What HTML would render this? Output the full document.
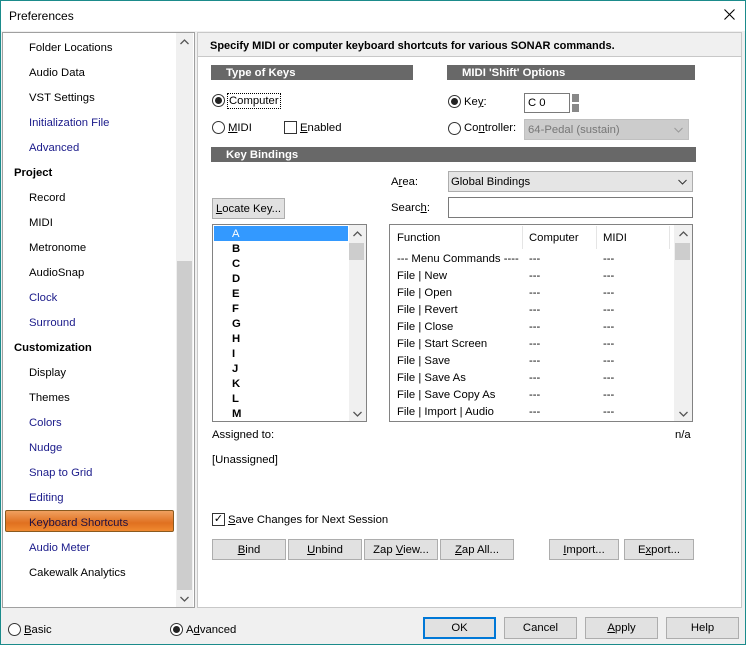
<!DOCTYPE html>
<html><head><style>
*{box-sizing:border-box;margin:0;padding:0}
body{width:746px;height:645px;overflow:hidden;background:#f0f0f0;font-family:"Liberation Sans",sans-serif;font-size:11.3px;line-height:16px;color:#000;position:relative}
.a{position:absolute;white-space:nowrap}
#win{position:absolute;left:0;top:0;width:746px;height:645px;border:1px solid #1b8b8b}
#title{left:1px;top:1px;width:744px;height:30px;background:#fff}
.nav{left:29px}
.b{color:#1a1a8a}
.bar{background:#686868;color:#fff;font-weight:bold;height:15px;line-height:16px;padding-left:15px}
.btn{background:#e1e1e1;border:1px solid #adadad;height:21px;line-height:20px;text-align:center}
.rad{width:13px;height:13px;border:1px solid #333;border-radius:50%;background:#fff}
.rad.on::after{content:"";position:absolute;left:2px;top:2px;width:7px;height:7px;border-radius:50%;background:#222}
.chk{width:13px;height:13px;border:1px solid #333;background:#fff}
.u{text-decoration:underline}
.lk{font-weight:bold;left:232px}
.fr{left:397px}.cc{left:529px}.mc{left:603px}
.chev{position:absolute;right:5px;top:7px}
</style></head><body>
<div id="win"></div>
<div class="a" id="title"></div>
<div class="a" style="left:9px;top:8px;font-size:12px">Preferences</div>
<svg class="a" style="left:724px;top:9px" width="11" height="11"><path d="M0.5 0.5L10.5 10.5M10.5 0.5L0.5 10.5" stroke="#000" stroke-width="1.1"/></svg>

<!-- left panel -->
<div class="a" style="left:2px;top:32px;width:193px;height:576px;background:#fff;border:1px solid #a0a0a0"></div>
<div class="a" style="left:176px;top:33px;width:17px;height:574px;background:#f0f0f0"></div>
<div class="a" style="left:177px;top:261px;width:15px;height:329px;background:#cdcdcd"></div>
<svg class="a" style="left:180px;top:39px" width="9" height="6"><path d="M0.5 5L4.5 1L8.5 5" stroke="#555" fill="none" stroke-width="1.3"/></svg>
<svg class="a" style="left:180px;top:596px" width="9" height="6"><path d="M0.5 1L4.5 5L8.5 1" stroke="#555" fill="none" stroke-width="1.3"/></svg>
<div class="a nav" style="top:40px">Folder Locations</div>
<div class="a nav" style="top:65px">Audio Data</div>
<div class="a nav" style="top:90px">VST Settings</div>
<div class="a nav b" style="top:115px">Initialization File</div>
<div class="a nav b" style="top:140px">Advanced</div>
<div class="a" style="left:14px;top:165px;font-weight:bold">Project</div>
<div class="a nav" style="top:190px">Record</div>
<div class="a nav" style="top:215px">MIDI</div>
<div class="a nav" style="top:240px">Metronome</div>
<div class="a nav" style="top:265px">AudioSnap</div>
<div class="a nav b" style="top:290px">Clock</div>
<div class="a nav b" style="top:315px">Surround</div>
<div class="a" style="left:14px;top:340px;font-weight:bold">Customization</div>
<div class="a nav" style="top:365px">Display</div>
<div class="a nav" style="top:390px">Themes</div>
<div class="a nav b" style="top:415px">Colors</div>
<div class="a nav b" style="top:440px">Nudge</div>
<div class="a nav b" style="top:465px">Snap to Grid</div>
<div class="a nav b" style="top:490px">Editing</div>
<div class="a" style="left:5px;top:510px;width:169px;height:22px;border:1px solid #8a5a20;border-radius:2px;background:linear-gradient(#f0a060,#e07020 60%,#f08a30)"></div>
<div class="a nav" style="top:515px;color:#201040">Keyboard Shortcuts</div>
<div class="a nav b" style="top:540px">Audio Meter</div>
<div class="a nav" style="top:565px">Cakewalk Analytics</div>

<!-- right panel -->
<div class="a" style="left:197px;top:32px;width:545px;height:576px;background:#fff;border:1px solid #c8c8c8"></div>
<div class="a" style="left:198px;top:33px;width:543px;height:24px;background:#f0f0f0;border-bottom:1px solid #c8c8c8"></div>
<div class="a" style="left:210px;top:38px;font-weight:bold;font-size:11px">Specify MIDI or computer keyboard shortcuts for various SONAR commands.</div>

<div class="a bar" style="left:211px;top:65px;width:202px">Type of Keys</div>
<div class="a bar" style="left:447px;top:65px;width:248px;padding-left:15px">MIDI 'Shift' Options</div>
<div class="a rad on" style="left:212px;top:94px"></div>
<div class="a" style="left:227px;top:93px;border:1px dotted #000;padding:0 1px;line-height:14px">Computer</div>
<div class="a rad" style="left:212px;top:121px"></div>
<div class="a" style="left:228px;top:120px"><span class="u">M</span>IDI</div>
<div class="a chk" style="left:284px;top:121px"></div>
<div class="a" style="left:300px;top:120px"><span class="u">E</span>nabled</div>

<div class="a rad on" style="left:448px;top:95px"></div>
<div class="a" style="left:464px;top:94px">Ke<span class="u">y</span>:</div>
<div class="a" style="left:524px;top:93px;width:46px;height:20px;border:1px solid #7a7a7a;background:#fff;padding:1px 3px">C 0</div>
<div class="a" style="left:572px;top:94px;width:7px;height:8px;background:#888"></div>
<div class="a" style="left:572px;top:104px;width:7px;height:8px;background:#888"></div>
<div class="a rad" style="left:448px;top:122px"></div>
<div class="a" style="left:464px;top:120px">Co<span class="u">n</span>troller:</div>
<div class="a" style="left:524px;top:119px;width:165px;height:21px;background:#ccc;border:1px solid #c0c0c0;color:#777;padding:2px 3px">64-Pedal (sustain)<svg class="chev" width="9" height="6"><path d="M0.5 1L4.5 5L8.5 1" stroke="#999" fill="none"/></svg></div>

<div class="a bar" style="left:211px;top:147px;width:485px">Key Bindings</div>

<div class="a" style="left:391px;top:174px">A<span class="u">r</span>ea:</div>
<div class="a" style="left:448px;top:171px;width:245px;height:21px;background:#e5e5e5;border:1px solid #adadad;padding:2px 2px">Global Bindings<svg class="chev" width="9" height="6"><path d="M0.5 1L4.5 5L8.5 1" stroke="#333" fill="none"/></svg></div>
<div class="a" style="left:391px;top:200px">Searc<span class="u">h</span>:</div>
<div class="a" style="left:448px;top:197px;width:245px;height:21px;background:#fff;border:1px solid #7a7a7a"></div>
<div class="a btn" style="left:212px;top:198px;width:73px"><span class="u">L</span>ocate Key...</div>

<!-- key list -->
<div class="a" style="left:212px;top:224px;width:155px;height:198px;border:1px solid #828282;background:#fff"></div>
<div class="a" style="left:349px;top:225px;width:17px;height:196px;background:#f0f0f0"></div>
<div class="a" style="left:349px;top:243px;width:15px;height:17px;background:#cdcdcd"></div>
<svg class="a" style="left:353px;top:231px" width="9" height="6"><path d="M0.5 5L4.5 1L8.5 5" stroke="#555" fill="none" stroke-width="1.3"/></svg>
<svg class="a" style="left:353px;top:411px" width="9" height="6"><path d="M0.5 1L4.5 5L8.5 1" stroke="#555" fill="none" stroke-width="1.3"/></svg>
<div class="a" style="left:214px;top:226px;width:134px;height:15px;background:#3399ff"></div>
<div class="a lk" style="top:226px;color:#fff;font-weight:normal">A</div>
<div class="a lk" style="top:241px">B</div>
<div class="a lk" style="top:256px">C</div>
<div class="a lk" style="top:271px">D</div>
<div class="a lk" style="top:286px">E</div>
<div class="a lk" style="top:301px">F</div>
<div class="a lk" style="top:316px">G</div>
<div class="a lk" style="top:331px">H</div>
<div class="a lk" style="top:346px">I</div>
<div class="a lk" style="top:361px">J</div>
<div class="a lk" style="top:376px">K</div>
<div class="a lk" style="top:391px">L</div>
<div class="a lk" style="top:406px">M</div>

<!-- function list -->
<div class="a" style="left:389px;top:224px;width:304px;height:198px;border:1px solid #828282;background:#fff"></div>
<div class="a" style="left:674px;top:225px;width:18px;height:196px;background:#f0f0f0"></div>
<div class="a" style="left:675px;top:243px;width:15px;height:17px;background:#cdcdcd"></div>
<svg class="a" style="left:679px;top:231px" width="9" height="6"><path d="M0.5 5L4.5 1L8.5 5" stroke="#555" fill="none" stroke-width="1.3"/></svg>
<svg class="a" style="left:679px;top:411px" width="9" height="6"><path d="M0.5 1L4.5 5L8.5 1" stroke="#555" fill="none" stroke-width="1.3"/></svg>
<div class="a" style="left:522px;top:226px;width:1px;height:23px;background:#e5e5e5"></div>
<div class="a" style="left:596px;top:226px;width:1px;height:23px;background:#e5e5e5"></div>
<div class="a" style="left:669px;top:226px;width:1px;height:23px;background:#e5e5e5"></div>
<div class="a fr" style="top:230px">Function</div><div class="a cc" style="top:230px">Computer</div><div class="a mc" style="top:230px">MIDI</div>
<div class="a fr" style="top:251px">--- Menu Commands ----</div><div class="a cc" style="top:251px">---</div><div class="a mc" style="top:251px">---</div>
<div class="a fr" style="top:268px">File | New</div><div class="a cc" style="top:268px">---</div><div class="a mc" style="top:268px">---</div>
<div class="a fr" style="top:285px">File | Open</div><div class="a cc" style="top:285px">---</div><div class="a mc" style="top:285px">---</div>
<div class="a fr" style="top:302px">File | Revert</div><div class="a cc" style="top:302px">---</div><div class="a mc" style="top:302px">---</div>
<div class="a fr" style="top:319px">File | Close</div><div class="a cc" style="top:319px">---</div><div class="a mc" style="top:319px">---</div>
<div class="a fr" style="top:336px">File | Start Screen</div><div class="a cc" style="top:336px">---</div><div class="a mc" style="top:336px">---</div>
<div class="a fr" style="top:353px">File | Save</div><div class="a cc" style="top:353px">---</div><div class="a mc" style="top:353px">---</div>
<div class="a fr" style="top:370px">File | Save As</div><div class="a cc" style="top:370px">---</div><div class="a mc" style="top:370px">---</div>
<div class="a fr" style="top:387px">File | Save Copy As</div><div class="a cc" style="top:387px">---</div><div class="a mc" style="top:387px">---</div>
<div class="a fr" style="top:404px">File | Import | Audio</div><div class="a cc" style="top:404px">---</div><div class="a mc" style="top:404px">---</div>

<div class="a" style="left:212px;top:427px">Assigned to:</div>
<div class="a" style="left:675px;top:427px">n/a</div>
<div class="a" style="left:212px;top:452px">[Unassigned]</div>

<div class="a chk" style="left:212px;top:513px;font-size:11px;line-height:11px;text-align:center">✓</div>
<div class="a" style="left:228px;top:512px"><span class="u">S</span>ave Changes for Next Session</div>
<div class="a btn" style="left:212px;top:539px;width:74px"><span class="u">B</span>ind</div>
<div class="a btn" style="left:288px;top:539px;width:74px"><span class="u">U</span>nbind</div>
<div class="a btn" style="left:364px;top:539px;width:74px">Zap <span class="u">V</span>iew...</div>
<div class="a btn" style="left:440px;top:539px;width:74px"><span class="u">Z</span>ap All...</div>
<div class="a btn" style="left:549px;top:539px;width:70px"><span class="u">I</span>mport...</div>
<div class="a btn" style="left:624px;top:539px;width:70px">E<span class="u">x</span>port...</div>

<!-- bottom -->
<div class="a rad" style="left:8px;top:623px"></div>
<div class="a" style="left:24px;top:622px"><span class="u">B</span>asic</div>
<div class="a rad on" style="left:170px;top:623px"></div>
<div class="a" style="left:186px;top:622px">A<span class="u">d</span>vanced</div>
<div class="a btn" style="left:423px;top:617px;width:73px;height:22px;border:2px solid #0078d7;line-height:18px">OK</div>
<div class="a btn" style="left:504px;top:617px;width:73px;height:22px">Cancel</div>
<div class="a btn" style="left:585px;top:617px;width:73px;height:22px"><span class="u">A</span>pply</div>
<div class="a btn" style="left:666px;top:617px;width:73px;height:22px">Help</div>
</body></html>
